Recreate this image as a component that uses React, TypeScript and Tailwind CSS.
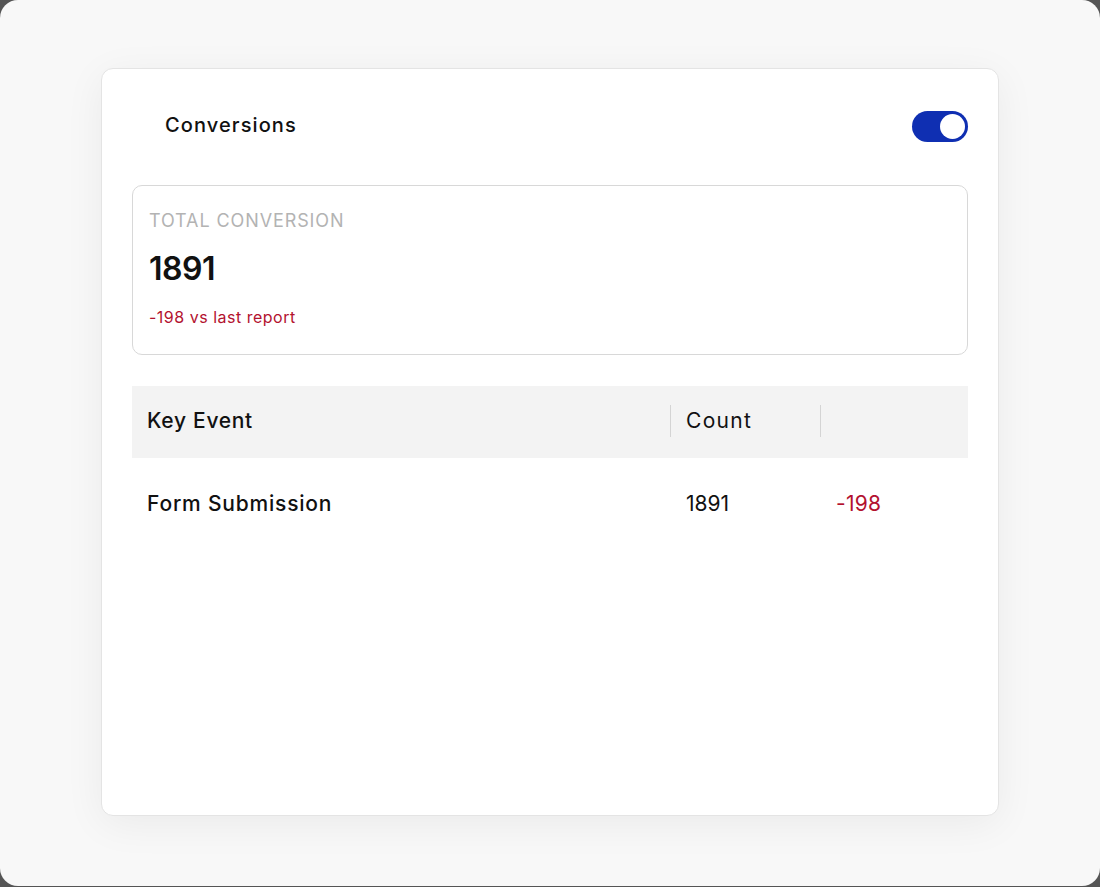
import React from "react";

export default function App() {
  return (
    <div className="w-[1100px] h-[887px] bg-[#555555]" style={{ fontFamily: "Inter, 'Noto Sans', sans-serif" }}>
      <div className="w-[1100px] h-[886px] rounded-[18px] bg-[#f8f8f8] pt-[68px] pl-[101px]">
        <div className="w-[898px] h-[748px] bg-white rounded-[12px] border border-[#e4e4e4] shadow-[0_8px_40px_rgba(0,0,0,0.06)] px-[30px] pt-[40px]">
          <div className="flex items-center justify-between h-[32px] pl-[33px]">
            <span className="text-[20px] font-medium text-[#111] tracking-[1.1px]">Conversions</span>
            <div className="w-[56px] h-[31px] mt-[2px] rounded-full bg-[#0f2fb2] flex items-center justify-end pr-[3px]">
              <div className="w-[25px] h-[25px] rounded-full bg-white" />
            </div>
          </div>
          <div className="mt-[44px] h-[170px] border border-[#d8d8d8] rounded-[10px] pl-[16px] pt-[24px]">
            <div className="text-[18px] leading-[22px] text-[#b3b3b3] tracking-[0.9px]">TOTAL CONVERSION</div>
            <div className="mt-[18px] text-[32px] leading-[38px] font-semibold text-[#111] tracking-[-0.5px]">1891</div>
            <div className="mt-[19px] text-[16px] leading-[20px] text-[#b3122f] tracking-[0.5px]">-198 vs last report</div>
          </div>
          <div className="mt-[31px] h-[72px] bg-[#f3f3f3] flex items-center text-[21px] text-[#111] pb-[3px]">
            <div className="w-[538px] pl-[15px] font-medium tracking-[0.7px]">Key Event</div>
            <div className="w-[1px] h-[32px] bg-[#d4d4d4]" />
            <div className="w-[149px] pl-[15px] tracking-[1.3px]">Count</div>
            <div className="w-[1px] h-[32px] bg-[#d4d4d4]" />
          </div>
          <div className="h-[92px] flex items-center text-[21px] text-[#111]">
            <div className="w-[539px] pl-[15px] font-medium tracking-[0.8px]">Form Submission</div>
            <div className="w-[150px] pl-[15px]">1891</div>
            <div className="pl-[15px] text-[#b3122f] tracking-[0.3px]">-198</div>
          </div>
        </div>
      </div>
    </div>
  );
}
